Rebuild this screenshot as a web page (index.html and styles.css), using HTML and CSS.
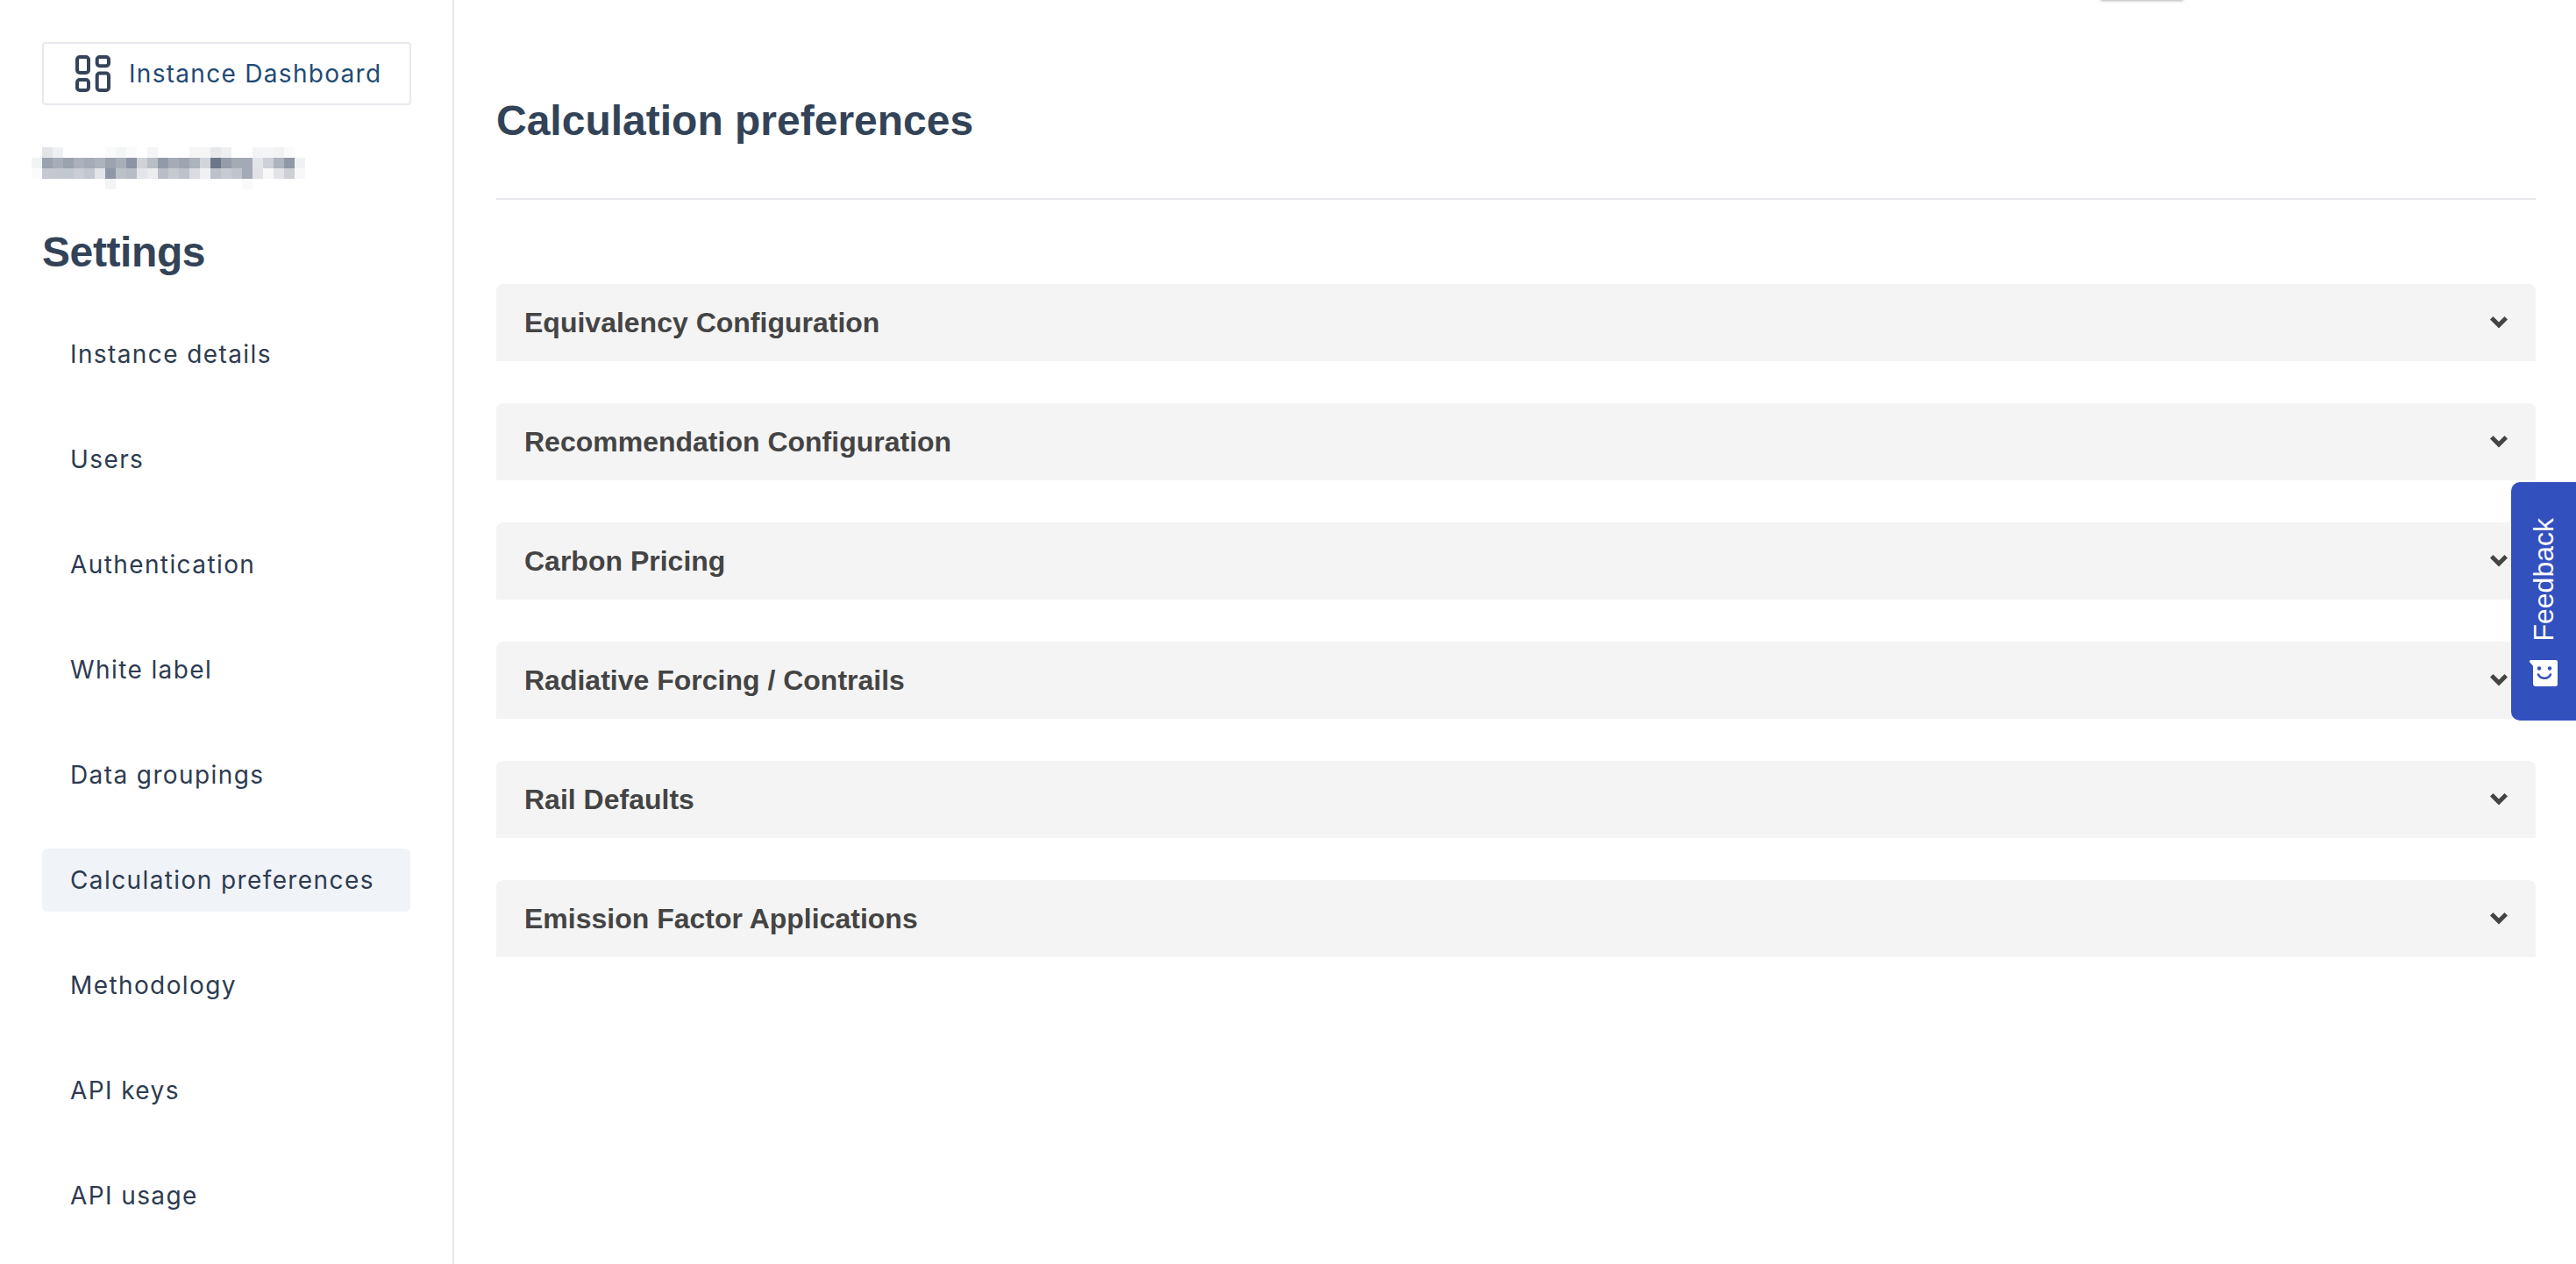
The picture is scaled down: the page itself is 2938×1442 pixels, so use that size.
FILE: index.html
```html
<!DOCTYPE html>
<html lang="en">
<head>
<meta charset="UTF-8">
<title>Calculation preferences</title>
<link rel="stylesheet" href="styles.css">
</head>
<body>

<div class="sidebar">
  <a class="dashboard-btn">
    <svg class="dashboard-icon" width="40" height="42" viewBox="0 0 40 42" fill="none" stroke="#35445a" stroke-width="4">
      <rect x="2" y="2" width="13" height="18" rx="3"/>
      <rect x="24.700" y="2" width="13.300" height="10.200" rx="3"/>
      <rect x="2" y="28" width="13" height="12" rx="3"/>
      <rect x="24.700" y="20.500" width="13.300" height="19.500" rx="3"/>
    </svg>
    <span>Instance Dashboard</span>
  </a>

  <!-- blurred account name -->
  <svg class="blurred-name" width="312" height="48" viewBox="0 0 312 48" shape-rendering="crispEdges">
    <g>
      <rect x="12" y="0" width="12" height="12" fill="#e2e4e8"/><rect x="24" y="0" width="12" height="12" fill="#eff0f2"/>
      <rect x="84" y="0" width="12" height="12" fill="#f9fafa"/><rect x="96" y="0" width="12" height="12" fill="#f4f5f6"/>
      <rect x="108" y="0" width="12" height="12" fill="#fbfbfc"/><rect x="132" y="0" width="12" height="12" fill="#f4f5f6"/>
      <rect x="180" y="0" width="12" height="12" fill="#f6f6f7"/><rect x="192" y="0" width="12" height="12" fill="#f6f6f7"/>
      <rect x="204" y="0" width="12" height="12" fill="#e7e8ea"/><rect x="216" y="0" width="12" height="12" fill="#eeeff0"/>
      <rect x="252" y="0" width="12" height="12" fill="#f4f4f6"/><rect x="264" y="0" width="12" height="12" fill="#f4f5f6"/>
      <rect x="276" y="0" width="12" height="12" fill="#f1f2f3"/><rect x="288" y="0" width="12" height="12" fill="#fbfbfc"/>
    </g>
    <g>
      <rect x="0" y="12" width="12" height="12" fill="#f2f3f4"/><rect x="12" y="12" width="12" height="12" fill="#9aa2ae"/>
      <rect x="24" y="12" width="12" height="12" fill="#a7adb8"/><rect x="36" y="12" width="12" height="12" fill="#9ba3ae"/>
      <rect x="48" y="12" width="12" height="12" fill="#abb0ba"/><rect x="60" y="12" width="12" height="12" fill="#a5abb7"/>
      <rect x="72" y="12" width="12" height="12" fill="#adb2bc"/><rect x="84" y="12" width="12" height="12" fill="#9ca3af"/>
      <rect x="96" y="12" width="12" height="12" fill="#a9afb9"/><rect x="108" y="12" width="12" height="12" fill="#8c95a4"/>
      <rect x="120" y="12" width="12" height="12" fill="#cfd3d8"/><rect x="132" y="12" width="12" height="12" fill="#b9bdc6"/>
      <rect x="144" y="12" width="12" height="12" fill="#929aa8"/><rect x="156" y="12" width="12" height="12" fill="#a6acb7"/>
      <rect x="168" y="12" width="12" height="12" fill="#9ea5b1"/><rect x="180" y="12" width="12" height="12" fill="#adb3bd"/>
      <rect x="192" y="12" width="12" height="12" fill="#d2d5da"/><rect x="204" y="12" width="12" height="12" fill="#6c7789"/>
      <rect x="216" y="12" width="12" height="12" fill="#959caa"/><rect x="228" y="12" width="12" height="12" fill="#a5abb6"/>
      <rect x="240" y="12" width="12" height="12" fill="#a4aab5"/><rect x="252" y="12" width="12" height="12" fill="#e2e4e8"/>
      <rect x="264" y="12" width="12" height="12" fill="#cdd0d6"/><rect x="276" y="12" width="12" height="12" fill="#afb3bd"/>
      <rect x="288" y="12" width="12" height="12" fill="#9097a6"/><rect x="300" y="12" width="12" height="12" fill="#f0f1f3"/>
    </g>
    <g>
      <rect x="0" y="24" width="12" height="12" fill="#fcfcfc"/><rect x="12" y="24" width="12" height="12" fill="#c5c9cf"/>
      <rect x="24" y="24" width="12" height="12" fill="#c4c8ce"/><rect x="36" y="24" width="12" height="12" fill="#c3c7d0"/>
      <rect x="48" y="24" width="12" height="12" fill="#cbced4"/><rect x="60" y="24" width="12" height="12" fill="#c3c7cf"/>
      <rect x="72" y="24" width="12" height="12" fill="#e3e4e9"/><rect x="84" y="24" width="12" height="12" fill="#8f97a6"/>
      <rect x="96" y="24" width="12" height="12" fill="#bcc0c9"/><rect x="108" y="24" width="12" height="12" fill="#b7bcc5"/>
      <rect x="120" y="24" width="12" height="12" fill="#e3e5e8"/><rect x="132" y="24" width="12" height="12" fill="#ebecee"/>
      <rect x="144" y="24" width="12" height="12" fill="#b9bdc6"/><rect x="156" y="24" width="12" height="12" fill="#c6cad0"/>
      <rect x="168" y="24" width="12" height="12" fill="#bec2cb"/><rect x="180" y="24" width="12" height="12" fill="#dadce1"/>
      <rect x="192" y="24" width="12" height="12" fill="#f0f1f3"/><rect x="204" y="24" width="12" height="12" fill="#bdc1ca"/>
      <rect x="216" y="24" width="12" height="12" fill="#c7cad1"/><rect x="228" y="24" width="12" height="12" fill="#c0c4cc"/>
      <rect x="240" y="24" width="12" height="12" fill="#a5abb6"/><rect x="252" y="24" width="12" height="12" fill="#e0e2e6"/>
      <rect x="264" y="24" width="12" height="12" fill="#f8f8f9"/><rect x="276" y="24" width="12" height="12" fill="#e3e4e8"/>
      <rect x="288" y="24" width="12" height="12" fill="#ccd0d5"/><rect x="300" y="24" width="12" height="12" fill="#f8f8f9"/>
    </g>
    <rect x="84" y="36" width="12" height="12" fill="#f3f4f5"/><rect x="240" y="36" width="12" height="12" fill="#fafafa"/>
  </svg>

  <h2 class="sidebar-title">Settings</h2>

  <nav class="nav">
    <a class="nav-item">Instance details</a>
    <a class="nav-item">Users</a>
    <a class="nav-item">Authentication</a>
    <a class="nav-item">White label</a>
    <a class="nav-item">Data groupings</a>
    <a class="nav-item active">Calculation preferences</a>
    <a class="nav-item">Methodology</a>
    <a class="nav-item">API keys</a>
    <a class="nav-item">API usage</a>
  </nav>
</div>

<div class="content">
  <div class="page-header">
    <h1>Calculation preferences</h1>
  </div>

  <div class="accordion">
    <div class="accordion-row">
      <span>Equivalency Configuration</span>
      <svg class="chevron" width="20" height="14" viewBox="0 0 20 14"><path d="M0 3.500L3.500 0L10 6.500L16.500 0L20 3.500L10 13.500z"/></svg>
    </div>
    <div class="accordion-row">
      <span>Recommendation Configuration</span>
      <svg class="chevron" width="20" height="14" viewBox="0 0 20 14"><path d="M0 3.500L3.500 0L10 6.500L16.500 0L20 3.500L10 13.500z"/></svg>
    </div>
    <div class="accordion-row">
      <span>Carbon Pricing</span>
      <svg class="chevron" width="20" height="14" viewBox="0 0 20 14"><path d="M0 3.500L3.500 0L10 6.500L16.500 0L20 3.500L10 13.500z"/></svg>
    </div>
    <div class="accordion-row">
      <span>Radiative Forcing / Contrails</span>
      <svg class="chevron" width="20" height="14" viewBox="0 0 20 14"><path d="M0 3.500L3.500 0L10 6.500L16.500 0L20 3.500L10 13.500z"/></svg>
    </div>
    <div class="accordion-row">
      <span>Rail Defaults</span>
      <svg class="chevron" width="20" height="14" viewBox="0 0 20 14"><path d="M0 3.500L3.500 0L10 6.500L16.500 0L20 3.500L10 13.500z"/></svg>
    </div>
    <div class="accordion-row">
      <span>Emission Factor Applications</span>
      <svg class="chevron" width="20" height="14" viewBox="0 0 20 14"><path d="M0 3.500L3.500 0L10 6.500L16.500 0L20 3.500L10 13.500z"/></svg>
    </div>
  </div>
</div>

<!-- sliver of a menu hidden above the top edge -->
<div class="top-popover"></div>

<div class="feedback-tab">
  <span class="feedback-label">Feedback</span>
  <svg class="feedback-icon" width="32" height="30" viewBox="0 0 32 30">
    <path d="M0 1.500C0 .7.6 0 1.400 0H30c1.100 0 2 .9 2 2v25.500c0 1.300-1 2.500-2.500 2.500H7c-1.600 0-3-1.300-3-3V7.500C4 6.500 3.500 5.800 2.800 5.200L.6 3C.2 2.600 0 2 0 1.500z" fill="#fff"/>
    <circle cx="11" cy="9.500" r="2.200" fill="#3350bf"/>
    <circle cx="23" cy="9.500" r="2.200" fill="#3350bf"/>
    <path d="M10 16.500c1.500 3 3.600 4.300 7 4.300s5.500-1.300 7-4.300" fill="none" stroke="#3350bf" stroke-width="2.600" stroke-linecap="round"/>
  </svg>
</div>

</body>
</html>
```

FILE: styles.css
```css
body, html {
  height: 100%;
  margin: 0;
  overflow: hidden;
  background-color: #fff;
  font-family: "Liberation Sans", Arial, sans-serif;
}
body {
  display: flex;
}
.sidebar {
  width: 518px;
  height: 100vh;
  flex-shrink: 0;
  box-sizing: border-box;
  padding: 48px 48px 0 48px;
  border-right: 2px solid #e6e7ea;
}
.dashboard-btn {
  display: flex;
  align-items: center;
  gap: 21px;
  width: 421px;
  height: 72px;
  box-sizing: border-box;
  padding-left: 36px;
  border: 2px solid #e8e9ef;
  border-radius: 4px;
  font-family: Inter, sans-serif;
  font-size: 28px;
  letter-spacing: 1.3px;
  color: #1f4a75;
}
.blurred-name {
  display: block;
  margin: 48px 0 0 -12px;
}
.sidebar-title {
  margin: 44px 0 52px 0;
  font-size: 48px;
  line-height: 56px;
  font-weight: 700;
  letter-spacing: -0.4px;
  color: #334357;
}
.nav {
  display: flex;
  flex-direction: column;
  gap: 48px;
}
.nav-item {
  display: flex;
  align-items: center;
  width: 420px;
  height: 72px;
  box-sizing: border-box;
  padding-left: 32px;
  border-radius: 6px;
  font-family: Inter, sans-serif;
  font-size: 28px;
  letter-spacing: 1.4px;
  color: #2d3b50;
}
.nav-item.active {
  background-color: #f0f3f8;
}
.content {
  flex: 1;
  padding: 0 46px 0 48px;
}
.page-header {
  padding-top: 110px;
  height: 116px;
  border-bottom: 2px solid #e8e8ee;
}
.page-header h1 {
  margin: 0;
  font-size: 48px;
  line-height: 56px;
  font-weight: 700;
  color: #334357;
}
.accordion {
  display: flex;
  flex-direction: column;
  gap: 48px;
  margin-top: 96px;
}
.accordion-row {
  display: flex;
  align-items: center;
  justify-content: space-between;
  height: 88px;
  padding: 0 32px;
  background-color: #f4f4f4;
  border-radius: 8px 8px 0 0;
  font-size: 32px;
  font-weight: 700;
  color: #444;
}
.chevron {
  fill: #444;
}
.top-popover {
  position: fixed;
  top: -21px;
  left: 2396px;
  width: 94px;
  height: 21px;
  background-color: #fff;
  box-shadow: 0 1px 3px rgba(0, 0, 0, 0.3);
}
.feedback-tab {
  position: fixed;
  right: 0;
  top: 550px;
  display: flex;
  flex-direction: column;
  align-items: center;
  gap: 21px;
  width: 74px;
  height: 272px;
  box-sizing: border-box;
  padding-top: 41px;
  background-color: #3350bf;
  border-radius: 10px 0 0 10px;
}
.feedback-label {
  writing-mode: vertical-rl;
  transform: rotate(180deg);
  font-size: 32px;
  line-height: 40px;
  color: #fff;
}
```
